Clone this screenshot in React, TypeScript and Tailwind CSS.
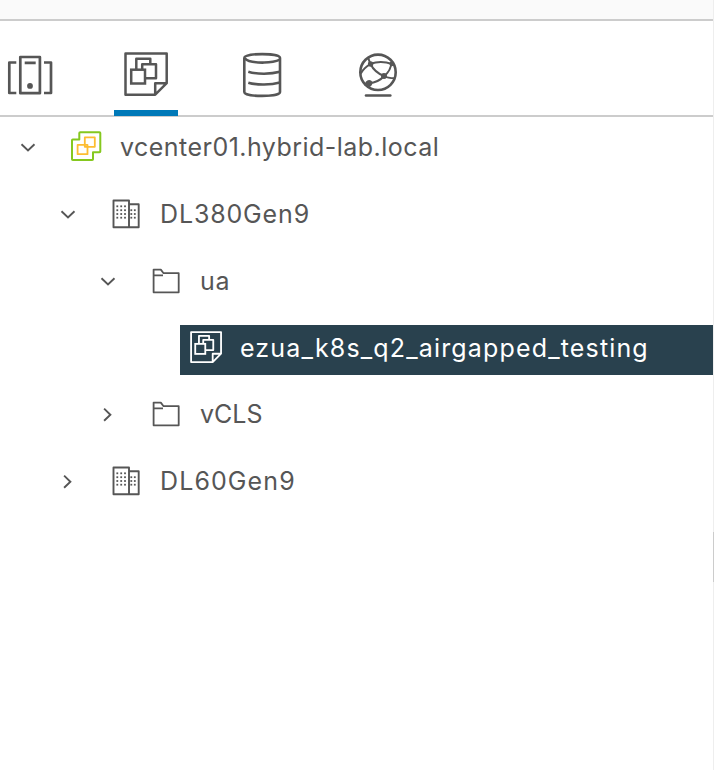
import type { ReactNode } from "react";
import clsx from "clsx";

function HostsIcon() {
  return (
    <svg className="h-12 w-12" viewBox="6 50 48 48" fill="none" stroke="#565656" strokeWidth="2.7" strokeLinejoin="round">
      <path d="M16.3 62.5H9.3V93H16.3M44 62.5H51V93H44M24.7 62.8H35.7" />
      <rect x="20.3" y="57" width="19.6" height="36.2" />
      <circle cx="30" cy="85.9" r="2.9" fill="#565656" stroke="none" />
    </svg>
  );
}

function VmIcon({ className }: { className: string }) {
  return (
    <svg className={className} viewBox="124 52.5 44 44" fill="none" stroke="currentColor" strokeWidth="2.5" strokeLinejoin="round">
      <path d="M125.5 54H166.7V83.7L155.2 95.2H125.5ZM155.2 95.2V83.8H166.7" />
      <path d="M136.3 69.5V59.2H150.3V64.5M142.2 69.5V64.7H156V78.7H145.5" />
      <rect x="131.2" y="70.2" width="13.8" height="13.8" strokeLinejoin="miter" />
    </svg>
  );
}

function StorageIcon() {
  return (
    <svg className="h-12 w-12" viewBox="238 51 48 48" fill="none" stroke="#565656" strokeWidth="2.6">
      <path d="M244.3 58C244.3 52.8 280 52.8 280 58V92C280 97.2 244.3 97.2 244.3 92Z" />
      <path d="M244.8 58.3Q246 60 249 60.9C257 63.2 271 63.5 280 59.6M248.3 71.7C257 74.5 271 74.2 280 71.8M248.3 82.7C257 85.3 271 85 280 82.4" />
    </svg>
  );
}

function NetworkIcon() {
  return (
    <svg className="h-12 w-12" viewBox="354 50 48 48" fill="none" stroke="#565656" strokeWidth="2">
      <circle cx="378" cy="72.3" r="17.7" strokeWidth="2.6" />
      <path d="M360.8 73.5Q364 67.7 370.5 64.2Q369 60.5 368 57M370.5 63.8Q381 60.2 392 64M370.5 64Q374.5 72.3 384 76Q391 71 391.5 62M384 76Q388 78.3 395 78.2M384 76Q379 82.2 368.5 83.4" />
      <g fill="#565656" stroke="none">
        <circle cx="370.6" cy="64" r="2.7" />
        <circle cx="384" cy="76" r="3" />
        <circle cx="391.8" cy="64" r="2.3" />
        <path d="M364 85L366 81.5Q370 78.5 372.3 81.8Q373 86 368.5 87.5Z" />
      </g>
      <path d="M366 95.5H390.3" strokeWidth="2.6" strokeLinecap="round" />
    </svg>
  );
}

function VcenterIcon() {
  return (
    <svg className="h-8 w-8" viewBox="70 130 32 32" fill="none" strokeWidth="2" strokeLinejoin="round">
      <path stroke="#85c81f" d="M80.3 132.2H99.5Q100.3 132.2 100.3 133V151.5Q100.3 152.3 99.5 152.3H93V159.2Q93 160 92.2 160H72.8Q72 160 72 159.2V140.3Q72 139.5 72.8 139.5H79.3V133Q79.3 132.2 80.3 132.2Z" />
      <path stroke="#fdbd32" strokeWidth="1.8" d="M77.6 144.9H84.8V137.4H94.8V146.8H87.5V154.2H77.6ZM84.8 144.9V146.8H87.5V144.9H84.8" />
    </svg>
  );
}

const mainDots = [206.3, 210.2, 214, 217.7];

function DatacenterIcon() {
  return (
    <svg className="h-8 w-8" viewBox="110 197 32 32" fill="none" stroke="#565656" strokeWidth="1.9" strokeLinejoin="round">
      <path d="M113.5 200.5H129V227.3H113.5ZM129 204.2H138.7V227.3H129" />
      <g fill="#565656" stroke="none">
        {mainDots.map((y, i) => (
          <g key={y}>
            {[117.3, 121.2, 125].map((x) => (
              <rect key={x} x={x - 0.9} y={y - 0.9} width="1.8" height="1.8" />
            ))}
            {i > 0 &&
              [131.3, 134.8].map((x) => (
                <rect key={x} x={x - 0.9} y={y - 0.9} width="1.8" height="1.8" />
              ))}
          </g>
        ))}
      </g>
    </svg>
  );
}

function FolderIcon() {
  return (
    <svg className="h-8 w-8" viewBox="150 264 32 32" fill="none" stroke="#565656" strokeWidth="1.8" strokeLinejoin="round">
      <path d="M153.6 269.6H160.8L163.6 273.2H178.7V292.3H153.6ZM153.6 275.3H163" />
    </svg>
  );
}

function Chevron({ open }: { open: boolean }) {
  return (
    <svg className="h-4 w-4 shrink-0" viewBox="0 0 16 16" fill="none" stroke="#565656" strokeWidth="1.9">
      <path d={open ? "M1.5 4.2L8 10.4L14.5 4.2" : "M4.1 1.6L10.4 7.7L4.1 13.8"} />
    </svg>
  );
}

type RowProps = {
  label: string;
  icon: ReactNode;
  open?: boolean;
  selected?: boolean;
  indent: string;
  text: string;
};

function TreeRow({ label, icon, open, selected, indent, text }: RowProps) {
  return (
    <div className={clsx("flex h-[50px] shrink-0", indent, selected ? "bg-[#29414e] text-white" : "text-[#565656]")}>
      {open !== undefined && (
        <div className="w-[50px] shrink-0 pt-4">
          <Chevron open={open} />
        </div>
      )}
      <div className="w-[50px] shrink-0 pt-[6px]">{icon}</div>
      <div className={clsx("h-[46px] whitespace-nowrap text-[25px] leading-[46px]", text)}>{label}</div>
    </div>
  );
}

export default function App() {
  return (
    <div className="flex h-[770px] w-[714px] overflow-hidden bg-white font-['Inter','Noto_Sans',sans-serif]">
      <main className="flex w-[713px] flex-col">
        <div className="h-[21px] shrink-0 border-b-2 border-[#ccc] bg-[#fafafa]" />
        <nav className="flex h-24 shrink-0 border-b-2 border-[#ccc]">
          <div className="w-[114px] pt-[29px] pl-[6px]"><HostsIcon /></div>
          <div className="-mb-px flex w-16 flex-col justify-between">
            <div className="pt-[31px] pl-[10px] text-[#565656]"><VmIcon className="h-11 w-11" /></div>
            <div className="h-[6px] bg-[#0079b8]" />
          </div>
          <div className="w-[116px] pt-[30px] pl-[60px]"><StorageIcon /></div>
          <div className="pt-[29px] pl-[60px]"><NetworkIcon /></div>
        </nav>
        <div className="flex flex-col pt-[7px]">
          <TreeRow label="vcenter01.hybrid-lab.local" icon={<VcenterIcon />} open indent="mb-[17px] pl-5" text="tracking-[0.47px]" />
          <TreeRow label="DL380Gen9" icon={<DatacenterIcon />} open indent="mb-[17px] pl-[60px]" text="tracking-[0.85px]" />
          <TreeRow label="ua" icon={<FolderIcon />} open indent="mb-[17px] pl-[100px]" text="tracking-[0.8px]" />
          <TreeRow label="ezua_k8s_q2_airgapped_testing" icon={<VmIcon className="h-8 w-8" />} selected indent="mb-4 ml-[180px] pl-[10px]" text="tracking-[1.16px]" />
          <TreeRow label="vCLS" icon={<FolderIcon />} open={false} indent="mb-[17px] pl-[100px]" text="tracking-[0px]" />
          <TreeRow label="DL60Gen9" icon={<DatacenterIcon />} open={false} indent="pl-[60px]" text="tracking-[1.1px]" />
        </div>
      </main>
      <aside className="w-px bg-[#eee] pt-[532px]">
        <div className="h-[50px] bg-[#ccc]" />
      </aside>
    </div>
  );
}
